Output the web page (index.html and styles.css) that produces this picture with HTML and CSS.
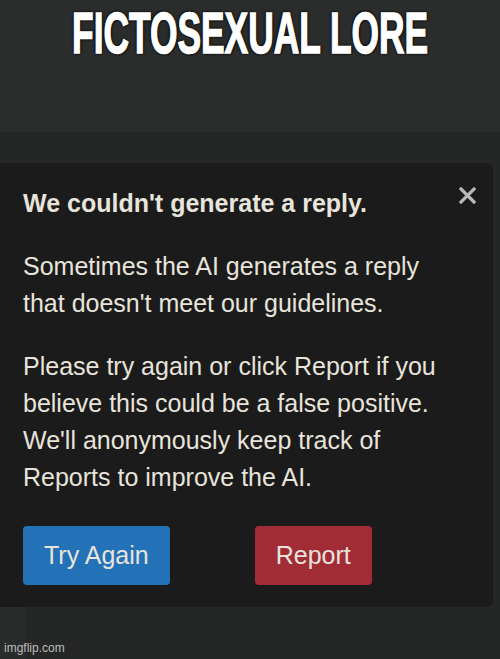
FILE: index.html
```
<!DOCTYPE html>
<html lang="en">
  <head>
    <meta charset="UTF-8" />
    <meta name="viewport" content="width=device-width, initial-scale=1.0" />
    <title>We couldn't generate a reply</title>
    <link rel="stylesheet" href="styles.css">
  </head>
  <body>
    <header class="meme-header">
      <h1 class="meme-caption">FICTOSEXUAL LORE</h1>
    </header>

    <main class="stage">
      <div class="dialog">
        <div class="dialog-head">
          <h2 class="dialog-title">We couldn't generate a reply.</h2>
          <button class="close-btn" aria-label="Close">
            <svg width="17" height="17" viewBox="0 0 17 17">
              <path d="M2 2 L15 15 M15 2 L2 15" stroke="#b8b8b8" stroke-width="3.2" stroke-linecap="square" />
            </svg>
          </button>
        </div>
        <p class="dialog-text">Sometimes the AI generates a reply that doesn't meet our guidelines.</p>
        <p class="dialog-text">Please try again or click Report if you believe this could be a false positive. We'll anonymously keep track of Reports to improve the AI.</p>
        <div class="dialog-actions">
          <button class="btn btn-blue">Try Again</button>
          <button class="btn btn-red">Report</button>
        </div>
      </div>
      <div class="stage-foot">
        <div class="side-strip"></div>
      </div>
      <span class="watermark">imgflip.com</span>
    </main>
  </body>
</html>
```

FILE: styles.css
```
body {
  margin: 0;
  background: #252727;
  font-family: "Liberation Sans", Arial, sans-serif;
  height: 659px;
  overflow: hidden;
}

.meme-header {
  height: 132px;
  background: #2b2d2d;
  display: flex;
  justify-content: center;
}

.meme-caption {
  margin: 0;
  padding-top: 3px;
  font-family: "Liberation Sans", Arial, sans-serif;
  font-weight: 700;
  font-size: 57px;
  line-height: 60px;
  color: #ffffff;
  -webkit-text-stroke: 1.5px #ffffff;
  text-shadow: 0 0 3px #000, 1px 1px 3px #000, -1px -1px 3px #000, 0 0 1px #000;
  transform: scaleX(0.62);
  white-space: nowrap;
}

.stage {
  position: relative;
  height: 527px;
  display: flex;
  flex-direction: column;
}

.dialog {
  margin-top: 31px;
  width: 493px;
  height: 444px;
  box-sizing: border-box;
  padding: 22px 17px 22px 23px;
  background: #1b1b1b;
  border-radius: 0 6px 6px 0;
  color: #e8e4dc;
  display: flex;
  flex-direction: column;
}

.dialog-head {
  display: flex;
  justify-content: space-between;
  align-items: flex-start;
}

.dialog-title {
  margin: 0;
  font-size: 25px;
  font-weight: 700;
  line-height: 37px;
}

.close-btn {
  background: none;
  border: none;
  padding: 0;
  margin-top: 2px;
  width: 17px;
  height: 17px;
  cursor: pointer;
}

.dialog-text {
  margin: 26px 0 0;
  max-width: 430px;
  font-size: 25px;
  line-height: 37px;
}

.dialog-actions {
  display: flex;
  gap: 85px;
  margin-top: auto;
}

.btn {
  font-family: "Liberation Sans", Arial, sans-serif;
  font-size: 25px;
  height: 59px;
  padding: 0 21px;
  border: none;
  border-radius: 4px;
  color: #e8e4dc;
  cursor: pointer;
}

.btn-blue {
  background: #2371b6;
}

.btn-red {
  background: #a22c36;
}

.stage-foot {
  flex: 1;
  display: flex;
}

.side-strip {
  width: 25px;
  background: #2a2c2c;
}

.watermark {
  position: absolute;
  left: 4px;
  bottom: 4px;
  font-size: 12px;
  color: #bdbdbd;
}
```
